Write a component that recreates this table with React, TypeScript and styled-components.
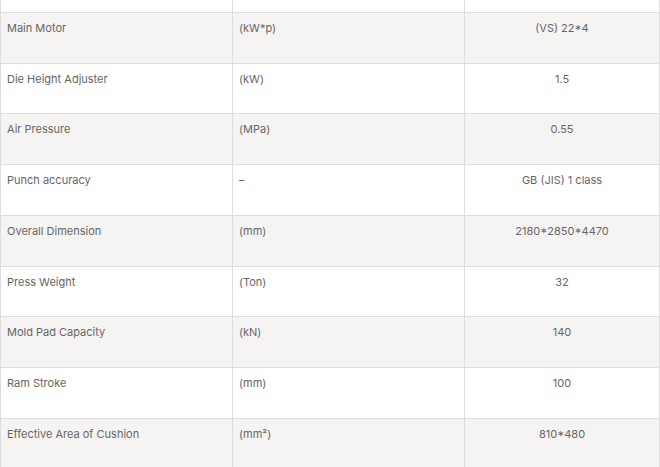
import React from "react";
import styled, { createGlobalStyle } from "styled-components";

const Global = createGlobalStyle`
  html, body { margin: 0; padding: 0; background: #fff; overflow: hidden; }
  body { font-family: Inter, "Noto Sans", Arial, sans-serif; }
`;

const Viewport = styled.div`
  width: 660px;
  height: 467px;
  overflow: hidden;
`;

const Table = styled.div`
  display: flex;
  flex-direction: column;
  margin-top: -38px;
  border-left: 1px solid #dddddd;
  border-right: 1px solid #dddddd;
  box-sizing: border-box;
  width: 660px;
`;

const Row = styled.div<{ $shade: boolean }>`
  display: grid;
  grid-template-columns: 231px 232px 1fr;
  height: 50.75px;
  box-sizing: border-box;
  border-bottom: 1px solid #dddddd;
  background: ${(p) => (p.$shade ? "#f5f4f2" : "#ffffff")};
`;

const Cell = styled.div<{ $center?: boolean; $first?: boolean }>`
  box-sizing: border-box;
  padding: 7px 6px 0 6px;
  border-left: ${(p) => (p.$first ? "none" : "1px solid #dddddd")};
  font-size: 11px;
  line-height: 16.5px;
  color: #666666;
  text-align: ${(p) => (p.$center ? "center" : "left")};
`;

const rows: [string, string, string][] = [
  ["", "", ""],
  ["Main Motor", "(kW*p)", "(VS) 22*4"],
  ["Die Height Adjuster", "(kW)", "1.5"],
  ["Air Pressure", "(MPa)", "0.55"],
  ["Punch accuracy", "–", "GB (JIS) 1 class"],
  ["Overall Dimension", "(mm)", "2180*2850*4470"],
  ["Press Weight", "(Ton)", "32"],
  ["Mold Pad Capacity", "(kN)", "140"],
  ["Ram Stroke", "(mm)", "100"],
  ["Effective Area of Cushion", "(mm²)", "810*480"],
];

export default function App() {
  return (
    <Viewport>
      <Global />
      <Table>
        {rows.map((r, i) => (
          <Row key={i} $shade={i % 2 === 1}>
            <Cell $first>{r[0]}</Cell>
            <Cell>{r[1]}</Cell>
            <Cell $center>{r[2]}</Cell>
          </Row>
        ))}
      </Table>
    </Viewport>
  );
}
